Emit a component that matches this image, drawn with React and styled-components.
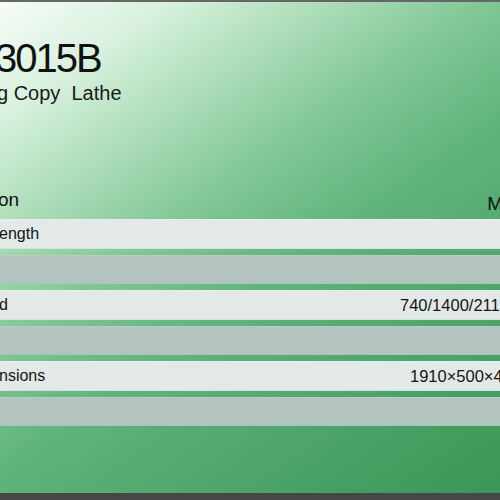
import React from "react";
import styled, { createGlobalStyle } from "styled-components";

const Global = createGlobalStyle`
  html, body { margin: 0; padding: 0; }
  body { font-family: "Liberation Sans", Arial, sans-serif; color: #111; }
`;

const Frame = styled.div`
  width: 500px;
  height: 500px;
  box-sizing: border-box;
  overflow: hidden;
  border-top: 2px solid #666;
  border-bottom: 7px solid #474747;
  background: linear-gradient(145deg, #f5fcf6 0%, #d8f1de 14%, #bde5c6 22%, #80c795 41%, #62b47d 55%, #57ac72 66%, #46a063 85%, #3a9657 100%);
  display: flex;
  flex-direction: column;
  white-space: nowrap;
`;

const Title = styled.h1`
  margin: 36px 0 0 -5px;
  font-weight: 400;
  font-size: 40px;
  line-height: 40px;
  letter-spacing: -2px;
  color: #111;
`;

const Subtitle = styled.div`
  margin: 3px 0 0 -3px;
  font-size: 20px;
  line-height: 24px;
  color: #1a1a1a;
`;

const HeadRow = styled.div`
  margin-top: 84px;
  display: flex;
  justify-content: space-between;
  align-items: baseline;
  font-size: 19px;
  line-height: 22px;
`;

const HeadCell = styled.span`
  margin: ${(p) => (p.$right ? "0 -3px 0 0" : "0 0 0 -2px")};
  transform: translateY(${(p) => (p.$right ? "4px" : "0")});
`;

const Table = styled.div`
  margin-top: 8px;
  display: flex;
  flex-direction: column;
  gap: 6px;
`;

const Row = styled.div`
  height: 29.5px;
  box-sizing: border-box;
  display: flex;
  align-items: center;
  background: ${(p) => (p.$shade ? "#b3c4bf" : "#e2e9e7")};
  border-top: 1px solid ${(p) => (p.$shade ? "#bccbc6" : "#e8eeec")};
  border-bottom: 1px solid ${(p) => (p.$shade ? "#a7c6b6" : "#d4e2dc")};
  font-size: 16px;
  line-height: 18px;
  color: #151515;
`;

const Label = styled.span`
  width: 380px;
  flex: none;
  margin-left: -1px;
`;

const Value = styled.span`
  flex: none;
  padding-left: ${(p) => p.$indent}px;
  font-size: 16.5px;
`;

const rows = [
  { label: "ength", value: "", shade: false },
  { label: "", value: "", shade: true },
  { label: "d", value: "740/1400/2110", indent: 21, shade: false },
  { label: "", value: "", shade: true },
  { label: "nsions", value: "1910×500×450", indent: 31, shade: false },
  { label: "", value: "", shade: true },
];

export default function App() {
  return (
    <>
      <Global />
      <Frame>
        <Title>3015B</Title>
        <Subtitle>g Copy&nbsp; Lathe</Subtitle>
        <HeadRow>
          <HeadCell>on</HeadCell>
          <HeadCell $right>M</HeadCell>
        </HeadRow>
        <Table>
          {rows.map((r, i) => (
            <Row key={i} $shade={r.shade}>
              <Label>{r.label}</Label>
              {r.value && <Value $indent={r.indent}>{r.value}</Value>}
            </Row>
          ))}
        </Table>
      </Frame>
    </>
  );
}
